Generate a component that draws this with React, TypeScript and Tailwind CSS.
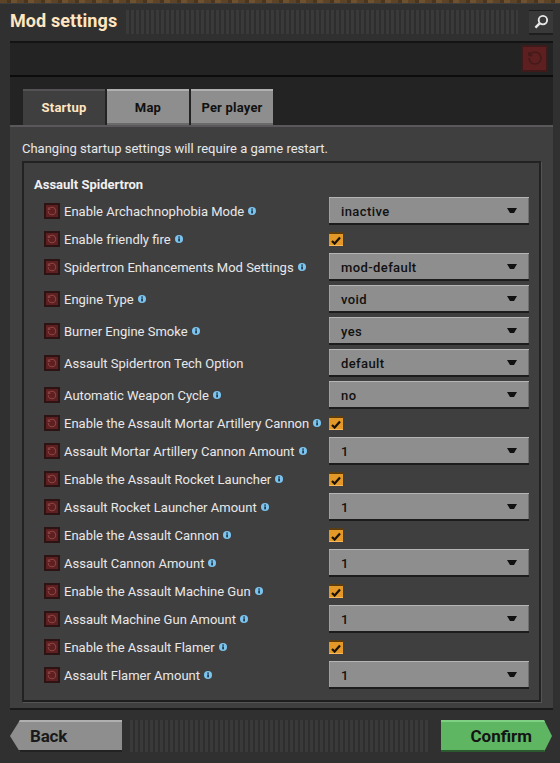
import React from "react";

const font = { fontFamily: '"Roboto", "Liberation Sans", sans-serif' };

type Row = { label: string; info?: boolean; value?: string };

const rows: Row[] = [
  { label: "Enable Archachnophobia Mode", info: true, value: "inactive" },
  { label: "Enable friendly fire", info: true },
  { label: "Spidertron Enhancements Mod Settings", info: true, value: "mod-default" },
  { label: "Engine Type", info: true, value: "void" },
  { label: "Burner Engine Smoke", info: true, value: "yes" },
  { label: "Assault Spidertron Tech Option", value: "default" },
  { label: "Automatic Weapon Cycle", info: true, value: "no" },
  { label: "Enable the Assault Mortar Artillery Cannon", info: true },
  { label: "Assault Mortar Artillery Cannon Amount", info: true, value: "1" },
  { label: "Enable the Assault Rocket Launcher", info: true },
  { label: "Assault Rocket Launcher Amount", info: true, value: "1" },
  { label: "Enable the Assault Cannon", info: true },
  { label: "Assault Cannon Amount", info: true, value: "1" },
  { label: "Enable the Assault Machine Gun", info: true },
  { label: "Assault Machine Gun Amount", info: true, value: "1" },
  { label: "Enable the Assault Flamer", info: true },
  { label: "Assault Flamer Amount", info: true, value: "1" },
];

function ResetIcon({ size, color }: { size: number; color: string }) {
  return (
    <svg width={size} height={size} viewBox="0 0 24 24" fill="none" stroke={color} strokeWidth={2.6}>
      <path d="M3 12a9 9 0 1 0 9-9 9.75 9.75 0 0 0-6.74 2.74L3 8" />
      <path d="M3 3v5h5" />
    </svg>
  );
}

function Info() {
  return (
    <svg width="8" height="8" viewBox="0 0 10 10" className="ml-[4px] shrink-0">
      <circle cx="5" cy="5" r="5" fill="#7cc4ee" />
      <rect x="4" y="4.2" width="2.2" height="3.8" fill="#1d3a50" />
      <rect x="4" y="1.8" width="2.2" height="1.6" fill="#1d3a50" />
    </svg>
  );
}

function Dropdown({ value }: { value: string }) {
  return (
    <div className="flex h-[28px] w-[200px] items-center justify-between bg-[#8e8e8e] pl-[12px] pr-[12px] text-[13px] font-medium text-[#111111] border-t border-t-[#b5b5b5] border-b-2 border-b-[#1c1c1c] shadow-[inset_1px_0_0_#a0a0a0,inset_-1px_0_0_#6e6e6e]">
      <span className="pt-[2px] tracking-[0.4px]">{value}</span>
      <svg width="10" height="5" viewBox="0 0 10 5">
        <path d="M0 0H10L7 5H3Z" fill="#111111" />
      </svg>
    </div>
  );
}

function Checkbox() {
  return (
    <div className="flex h-[14px] w-[14px] items-center justify-center border-t-2 border-t-[#5c3d10] bg-[#e39827] shadow-[inset_0_-1px_0_#f5b95a]">
      <svg width="10" height="9" viewBox="0 0 10 9" fill="none" stroke="#1a1206" strokeWidth={2.2}>
        <path d="M1 5l2.6 2.6L9 1.5" />
      </svg>
    </div>
  );
}

const stripes =
  "bg-[repeating-linear-gradient(90deg,#3b3a3b_0px,#3b3a3b_3px,#2f2e2f_3px,#2f2e2f_5px)]";

export default function App() {
  return (
    <div className="flex h-[763px] w-[560px] flex-col overflow-hidden bg-[#313031]" style={font}>
      <div className="h-[3px] bg-[repeating-linear-gradient(90deg,#5e4426_0px,#5e4426_7px,#4a361f_7px,#4a361f_11px,#6e5230_11px,#6e5230_17px)]" />
      <div className="h-[6px] border-t border-t-[#3f3e3f]" />
      <div className="flex h-[26px] items-center pl-[10px] pr-[7px]">
        <span className="-mt-[2px] w-[116px] text-[18px] font-bold leading-none tracking-[0.1px] text-[#ffe6c0]">Mod settings</span>
        <div className={`h-[24px] w-[392px] ${stripes}`} />
        <div className="ml-[11px] flex h-[25px] w-[24px] items-center justify-center border-t border-t-[#1a1a1a] bg-[#3a393a] border-b-2 border-b-[#1f1f1f]">
          <svg width="15" height="15" viewBox="0 0 16 16" fill="none" stroke="#e8e8e8" strokeWidth={2}>
            <circle cx="9.5" cy="6.5" r="4.5" />
            <path d="M6 10l-4.5 4.5" strokeWidth={2.6} />
          </svg>
        </div>
      </div>

      <div className="mx-[10px] mt-[6px] flex h-[669px] w-[543px] flex-col bg-[#242324] border-t-2 border-t-[#131313] border-b-2 border-b-[#1a1a1a]">
        <div className="flex h-[34px] items-center justify-end border-b-2 border-b-[#0c0c0c] pb-[2px] pr-[5px]">
          <div className="flex h-[27px] w-[27px] items-center justify-center border-2 border-[#3f1a1a] bg-[#5d1f20]">
            <ResetIcon size={16} color="#451a1a" />
          </div>
        </div>

        <div className="flex h-[48px] items-end gap-[2px] pl-[13px]">
          <div className="flex h-[36px] w-[82px] items-center justify-center border-t-2 border-t-[#545254] bg-[#403f40] text-[13px] font-bold tracking-[0.2px] text-[#ffe6c0]">
            Startup
          </div>
          <div className="flex h-[36px] w-[82px] items-center justify-center border-t-2 border-t-[#b0b0b0] bg-[#8e8e8e] text-[13px] font-bold tracking-[0.2px] text-[#111111] shadow-[inset_0_-2px_0_#6a6a6a]">
            Map
          </div>
          <div className="flex h-[36px] w-[82px] items-center justify-center border-t-2 border-t-[#b0b0b0] bg-[#8e8e8e] text-[13px] font-bold tracking-[0.2px] text-[#111111] shadow-[inset_0_-2px_0_#6a6a6a]">
            Per player
          </div>
        </div>

        <div className="flex min-h-0 flex-1 flex-col bg-[#403f40] border-t-2 border-t-[#5a585a] px-[12px]">
          <div className="flex h-[34px] items-center pt-[10px] text-[13px] text-[#e8e8e8]">
            Changing startup settings will require a game restart.
          </div>
          <div className="flex h-[541px] w-[519px] flex-col border-2 border-[#232223] border-b-[#1e1e1e] px-[10px] shadow-[1px_1px_0_#555355]">
            <div className="flex h-[34px] items-center pt-[10px] text-[13px] font-bold text-[#f0f0f0]">Assault Spidertron</div>
            <div className="flex flex-col gap-[4px] pl-[10px]">
              {rows.map((r) => (
                <div key={r.label} className={`flex items-center justify-between ${r.value ? "h-[28px]" : "h-[20px]"}`}>
                  <div className="flex items-center text-[13px] text-[#e8e8e8]">
                    <div className="mr-[4px] flex h-[16px] w-[16px] shrink-0 items-center justify-center border-2 border-[#2c1414] bg-[#5d1f20]">
                      <ResetIcon size={10} color="#8a4444" />
                    </div>
                    <span className="whitespace-nowrap pt-[2px]">{r.label}</span>
                    {r.info && <Info />}
                  </div>
                  <div className="w-[200px]">{r.value ? <Dropdown value={r.value} /> : <Checkbox />}</div>
                </div>
              ))}
            </div>
          </div>
        </div>
      </div>

      <div className="mt-[10px] flex h-[32px] items-stretch pl-[10px] pr-[8px]">
        <div className="flex w-[112px] items-center bg-[#8e8e8e] pl-[20px] pt-[1px] text-[17px] font-bold tracking-[-0.2px] text-[#1a1a1a] [clip-path:polygon(10px_0,100%_0,100%_100%,10px_100%,0_50%)] border-t-2 border-t-[#b0b0b0] border-b-2 border-b-[#222222]">
          Back
        </div>
        <div className={`ml-[8px] w-[300px] ${stripes}`} />
        <div className="ml-[11px] flex w-[111px] items-center justify-end bg-[#5eb663] pr-[20px] pt-[1px] text-[17px] font-bold text-[#141414] [clip-path:polygon(0_0,calc(100%-8px)_0,100%_50%,calc(100%-8px)_100%,0_100%)] border-t-2 border-t-[#7fd083] border-b-2 border-b-[#2c5a30]">
          Confirm
        </div>
      </div>
    </div>
  );
}
